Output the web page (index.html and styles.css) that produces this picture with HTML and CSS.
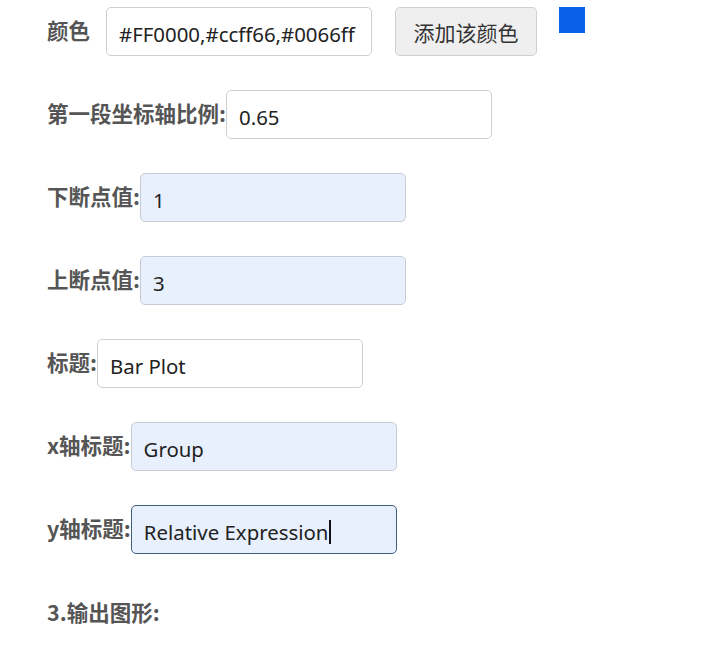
FILE: index.html
```html
<!DOCTYPE html>
<html lang="zh-CN">
<head>
<meta charset="utf-8">
<title>参数设置</title>
<link rel="stylesheet" href="styles.css">
</head>
<body>
<div class="form">
  <div class="row">
    <label class="label label-gap">颜色</label>
    <div class="input">#FF0000,#ccff66,#0066ff</div>
    <button class="btn">添加该颜色</button>
    <span class="swatch"></span>
  </div>
  <div class="row">
    <label class="label">第一段坐标轴比例:</label>
    <div class="input">0.65</div>
  </div>
  <div class="row">
    <label class="label">下断点值:</label>
    <div class="input auto">1</div>
  </div>
  <div class="row">
    <label class="label">上断点值:</label>
    <div class="input auto">3</div>
  </div>
  <div class="row">
    <label class="label">标题:</label>
    <div class="input">Bar Plot</div>
  </div>
  <div class="row">
    <label class="label">x轴标题:</label>
    <div class="input auto">Group</div>
  </div>
  <div class="row">
    <label class="label">y轴标题:</label>
    <div class="input auto focus">Relative Expression<span class="caret"></span></div>
  </div>
  <h3 class="section">3.输出图形:</h3>
</div>
</body>
</html>
```
FILE: styles.css
```css
html, body {
  margin: 0;
  padding: 0;
  background: #ffffff;
}
body {
  font-family: "Noto Sans", "Noto Sans CJK SC", sans-serif;
}
.form {
  padding: 7px 0 0 47px;
}
.row {
  display: flex;
  align-items: center;
  margin-bottom: 34px;
}
.label {
  font-family: "Noto Sans CJK SC", sans-serif;
  font-weight: 700;
  font-size: 21.5px;
  color: #555555;
  line-height: 1;
  margin-top: -4px;
}
.label-gap {
  margin-right: 16px;
}
.input {
  box-sizing: border-box;
  width: 266px;
  height: 49px;
  border: 1px solid #cfcfcf;
  border-radius: 5px;
  background: #ffffff;
  padding: 4px 12px 0;
  display: flex;
  align-items: center;
  font-family: "Noto Sans", sans-serif;
  font-size: 20.4px;
  color: #222222;
  white-space: nowrap;
  overflow: hidden;
}
.input.auto {
  background: #e8f0fe;
  border-color: #c9ccd4;
}
.input.focus {
  border: 1.5px solid #3f5f7d;
}
.caret {
  display: inline-block;
  width: 1.5px;
  height: 24px;
  background: #111111;
  margin-left: 1px;
}
.btn {
  box-sizing: border-box;
  height: 49px;
  width: 142px;
  margin-left: 23px;
  border: 1px solid #cfcfcf;
  border-radius: 5px;
  background: #efefef;
  font-family: "Noto Sans CJK SC", sans-serif;
  font-size: 21px;
  color: #333333;
  padding: 0;
}
.swatch {
  width: 26px;
  height: 26px;
  background: #0b5fe8;
  margin-left: 22px;
  align-self: flex-start;
}
.section {
  margin: 0;
  padding-top: 8px;
  font-family: "Noto Sans CJK SC", sans-serif;
  font-weight: 700;
  font-size: 21.5px;
  color: #555555;
}
```
